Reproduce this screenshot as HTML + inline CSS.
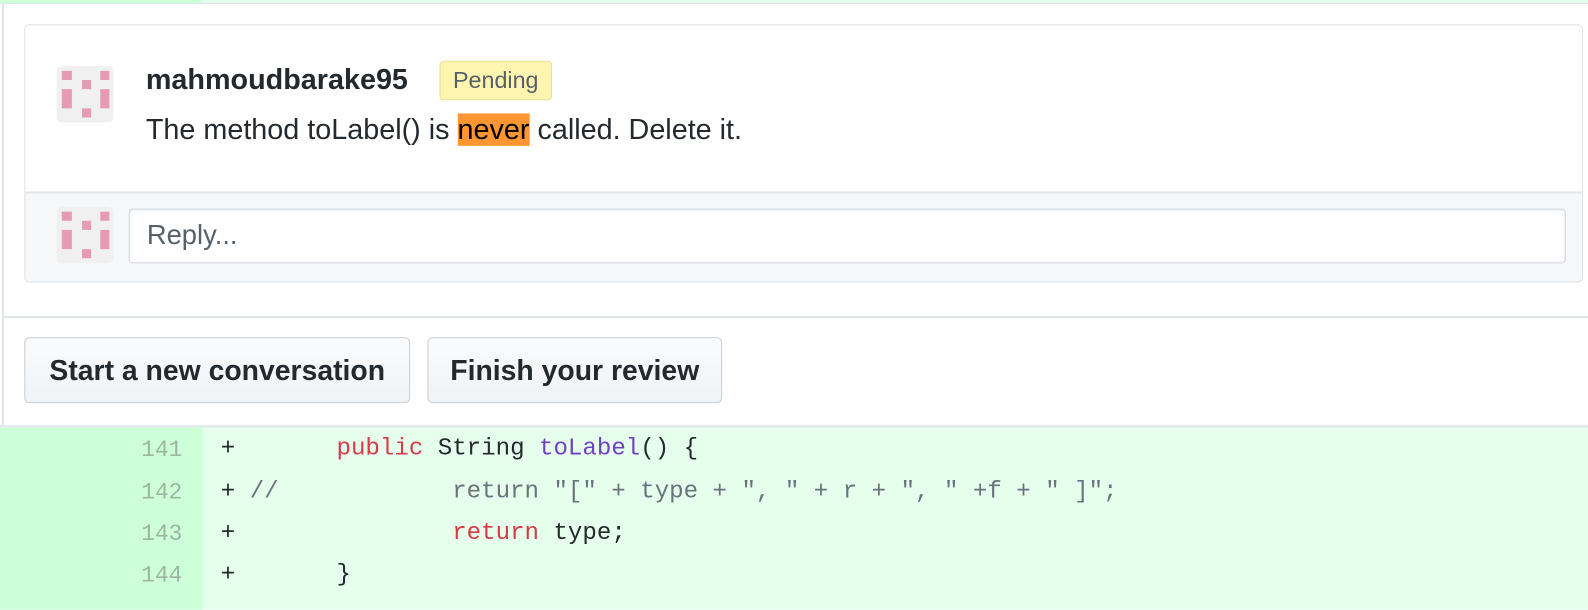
<!DOCTYPE html>
<html><head><style>
body{margin:0;width:1588px;height:600px;overflow:hidden;background:#fff;font-family:"Liberation Sans",sans-serif;position:relative}
#w{position:absolute;left:0;top:0;width:1568px;height:600px;transform:scale(1.0128);transform-origin:0 0}
.a{position:absolute}
.av{position:absolute;width:56px;height:56px;background:#f0f0f0;border-radius:5px}
.av i{position:absolute;background:#e79ab5}
.code{font-family:"Liberation Mono",monospace;font-size:23.8px;white-space:pre;color:#24292e}
.ln{position:absolute;left:0;width:180px;text-align:right;color:#9cb5a0;font-family:"Liberation Mono",monospace;font-size:22.5px}
.btn{position:absolute;top:333px;height:65px;border:1px solid #c8ccd1;border-radius:5px;background:linear-gradient(#fafbfc,#eff3f6);font-weight:bold;font-size:28px;color:#24292e;line-height:63px;text-align:center;box-sizing:border-box}
</style></head><body><div id="w">
<div class="a" style="left:0;top:0;width:1568px;height:4px;background:#e6ffed"></div>
<div class="a" style="left:0;top:0;width:200px;height:4px;background:#cdffd8"></div>
<div class="a" style="left:2px;top:4px;width:2px;height:418px;background:#e1e4e8"></div>
<div class="a" style="left:4px;top:3px;width:1564px;height:1px;background:#e1e4e8"></div>

<div class="a" style="left:24px;top:24px;width:1537px;height:253px;border:1px solid #dfe2e5;border-radius:5px;background:#f6f8fa;overflow:hidden">
  <div class="a" style="left:0;top:0;width:1537px;height:164px;background:#fff;border-bottom:2px solid #e1e4e8"></div>
</div>
<div class="av" style="left:56px;top:65px"><i style="left:5px;top:5px;width:10px;height:9px"></i><i style="left:25px;top:14px;width:9px;height:9px"></i><i style="left:43px;top:5px;width:9px;height:9px"></i><i style="left:5px;top:23px;width:10px;height:19px"></i><i style="left:43px;top:23px;width:9px;height:19px"></i><i style="left:25px;top:42px;width:9px;height:9px"></i></div>
<div class="a" style="left:144px;top:63px;font-weight:bold;font-size:28.4px;color:#24292e">mahmoudbarake95</div>
<div class="a" style="left:434px;top:60px;width:111px;height:39px;background:#fff5b1;border:1px solid #e8dc9a;border-radius:4px;box-sizing:border-box;font-size:23px;color:#586069;text-align:center;line-height:37px">Pending</div>
<div class="a" style="left:144px;top:112px;font-size:28.4px;color:#24292e">The method toLabel() is <span style="background:#ff9632;color:#000">never</span> called. Delete it.</div>

<div class="av" style="left:56px;top:204px"><i style="left:5px;top:5px;width:10px;height:9px"></i><i style="left:25px;top:14px;width:9px;height:9px"></i><i style="left:43px;top:5px;width:9px;height:9px"></i><i style="left:5px;top:23px;width:10px;height:19px"></i><i style="left:43px;top:23px;width:9px;height:19px"></i><i style="left:25px;top:42px;width:9px;height:9px"></i></div>
<div class="a" style="left:127px;top:206px;width:1419px;height:54px;background:#fff;border:1px solid #d1d5da;border-radius:4px;box-sizing:border-box;box-shadow:inset 0 1px 2px rgba(27,31,35,.075)"></div>
<div class="a" style="left:145px;top:217px;font-size:27px;color:#586069">Reply...</div>

<div class="a" style="left:4px;top:312px;width:1564px;height:2px;background:#e1e4e8"></div>
<div class="btn" style="left:24px;width:381px">Start a new conversation</div>
<div class="btn" style="left:422px;width:291px">Finish your review</div>

<div class="a" style="left:0;top:420px;width:1568px;height:2px;background:#e1e4e8"></div>
<div class="a" style="left:0;top:422px;width:1568px;height:180px;background:#e6ffed"></div>
<div class="a" style="left:0;top:422px;width:200px;height:180px;background:#cdffd8"></div>

<div class="a" style="left:0;top:429px;width:1568px">
  <div class="a" style="top:0;height:42px;line-height:30px;width:1568px"><span class="ln">141</span><span class="a code" style="left:218px">+       <span style="color:#d73a49">public</span> String <span style="color:#6f42c1">toLabel</span>() {</span></div>
  <div class="a" style="top:42px;height:42px;line-height:30px;width:1568px"><span class="ln">142</span><span class="a code" style="left:218px">+ <span style="color:#6a737d">//            return "[" + type + ", " + r + ", " +f + " ]";</span></span></div>
  <div class="a" style="top:83px;height:42px;line-height:30px;width:1568px"><span class="ln">143</span><span class="a code" style="left:218px">+               <span style="color:#d73a49">return</span> type;</span></div>
  <div class="a" style="top:124px;height:42px;line-height:30px;width:1568px"><span class="ln">144</span><span class="a code" style="left:218px">+       }</span></div>
</div>
</div></body></html>
